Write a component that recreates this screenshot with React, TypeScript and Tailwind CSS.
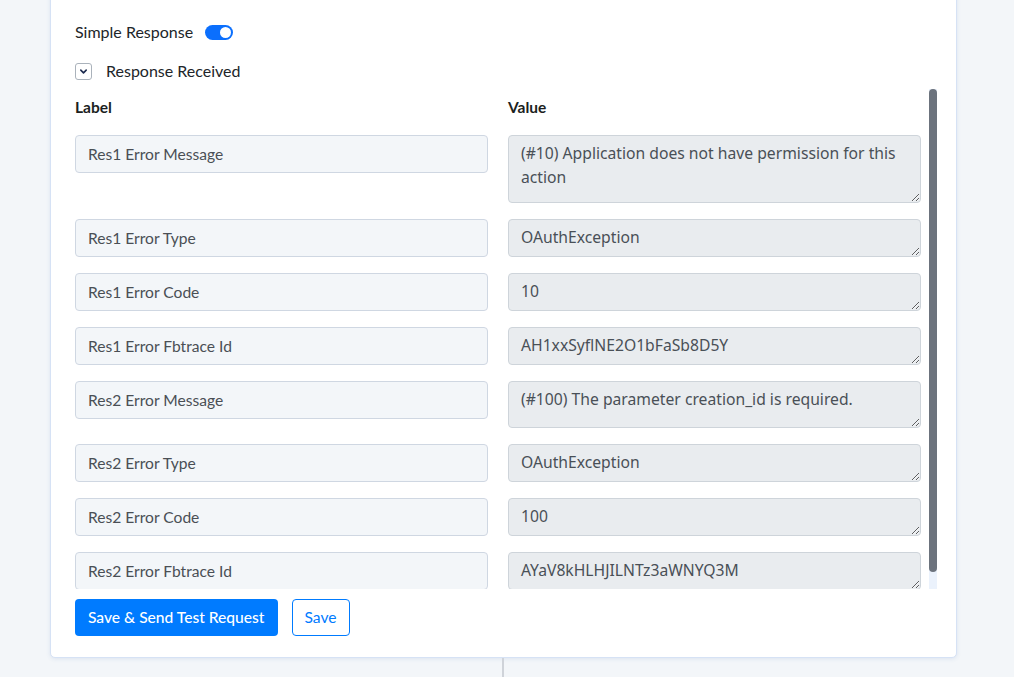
import { useState } from "react";

interface ResponseField {
  label: string;
  value: string;
  height: string;
}

// Fields returned by the last test request
const FIELDS: ResponseField[] = [
  { label: "Res1 Error Message", value: "(#10) Application does not have permission for this action", height: "h-[68px]" },
  { label: "Res1 Error Type", value: "OAuthException", height: "h-[38px]" },
  { label: "Res1 Error Code", value: "10", height: "h-[38px]" },
  { label: "Res1 Error Fbtrace Id", value: "AH1xxSyflNE2O1bFaSb8D5Y", height: "h-[38px]" },
  { label: "Res2 Error Message", value: "(#100) The parameter creation_id is required.", height: "h-[47px]" },
  { label: "Res2 Error Type", value: "OAuthException", height: "h-[38px]" },
  { label: "Res2 Error Code", value: "100", height: "h-[38px]" },
  { label: "Res2 Error Fbtrace Id", value: "AYaV8kHLHJILNTz3aWNYQ3M", height: "h-[38px]" },
];

function Toggle({ on, onChange }: { on: boolean; onChange: () => void }) {
  return (
    <button
      type="button"
      onClick={onChange}
      className={`flex h-[15px] w-[28px] items-center rounded-full px-[2px] ${
        on ? "justify-end bg-[#0b6ffd]" : "justify-start bg-[#ced4da]"
      }`}
    >
      <span className="h-[11px] w-[11px] rounded-full bg-white" />
    </button>
  );
}

export default function App() {
  const [simple, setSimple] = useState(true);
  const [open, setOpen] = useState(true);

  return (
    <div className="h-[677px] overflow-hidden bg-[#f3f6f9] font-['Lato',sans-serif]">
      <div className="ml-[50px] mt-[-10px] w-[907px] rounded-[5px] border border-[#d6e2f5] bg-white pb-[21px] pl-[24px] pr-[19px] pt-[31px] shadow-[0_1px_4px_rgba(60,100,170,0.12)]">
        <div className="flex items-center gap-[12px] text-[16px] leading-[20px] text-[#212529]">
          <span>Simple Response</span>
          <Toggle on={simple} onChange={() => setSimple(!simple)} />
        </div>

        <div className="mt-[19px] flex items-center gap-[14px] text-[16px] leading-[20px] text-[#212529]">
          <button
            type="button"
            onClick={() => setOpen(!open)}
            className="flex h-[17px] w-[17px] items-center justify-center rounded-[3px] border border-[#aab2bb] bg-white"
          >
            <svg width="9" height="9" viewBox="0 0 10 10" fill="none">
              <path d="M2 3.5 5 6.5 8 3.5" stroke="#1d2b4f" strokeWidth="1.8" strokeLinecap="round" strokeLinejoin="round" />
            </svg>
          </button>
          <span>Response Received</span>
        </div>

        {open && (
          <div className="mt-[8px] flex h-[500px] gap-[8px]">
            <div className="h-[500px] w-[846px] overflow-hidden">
              <div className="grid grid-cols-2 gap-x-[20px] pt-[8px] text-[15.5px] font-bold leading-[20px] text-[#1b1e21]">
                <span>Label</span>
                <span>Value</span>
              </div>
              <div className="mt-[18px] flex flex-col gap-[16px] pb-[18px]">
                {FIELDS.map((f) => (
                  <div key={f.label} className="grid grid-cols-2 items-start gap-x-[20px]">
                    <input
                      readOnly
                      value={f.label}
                      className="h-[38px] rounded-[4px] border border-[#cfd7e2] bg-[#f3f6f9] px-[12px] text-[15.6px] text-[#4a4f55] outline-none"
                    />
                    <textarea
                      readOnly
                      disabled
                      value={f.value}
                      className={`${f.height} resize-y rounded-[4px] border border-[#ced4da] bg-[#e9ecef] px-[12px] py-[5px] font-['Noto_Sans',sans-serif] text-[15.7px] leading-[24px] text-[#495057]`}
                    />
                  </div>
                ))}
              </div>
            </div>
            {/* scrollbar: track with thumb at the top */}
            <div className="flex h-[500px] w-[8px] flex-col bg-[#ebf2fc]">
              <div className="h-[483px] w-[8px] rounded-full bg-[#6c737d]" />
            </div>
          </div>
        )}

        <div className="mt-[10px] flex items-center gap-[14px]">
          <button
            type="button"
            className="h-[37px] rounded-[4px] bg-[#007bff] px-[13px] text-[15.6px] font-medium text-white"
          >
            Save &amp; Send Test Request
          </button>
          <button
            type="button"
            className="h-[37px] rounded-[4px] border border-[#007bff] bg-white px-[12px] text-[15.6px] text-[#007bff]"
          >
            Save
          </button>
        </div>
      </div>
      <div className="ml-[502px] h-[30px] w-[2px] bg-[#cfd3d9]" />
    </div>
  );
}
